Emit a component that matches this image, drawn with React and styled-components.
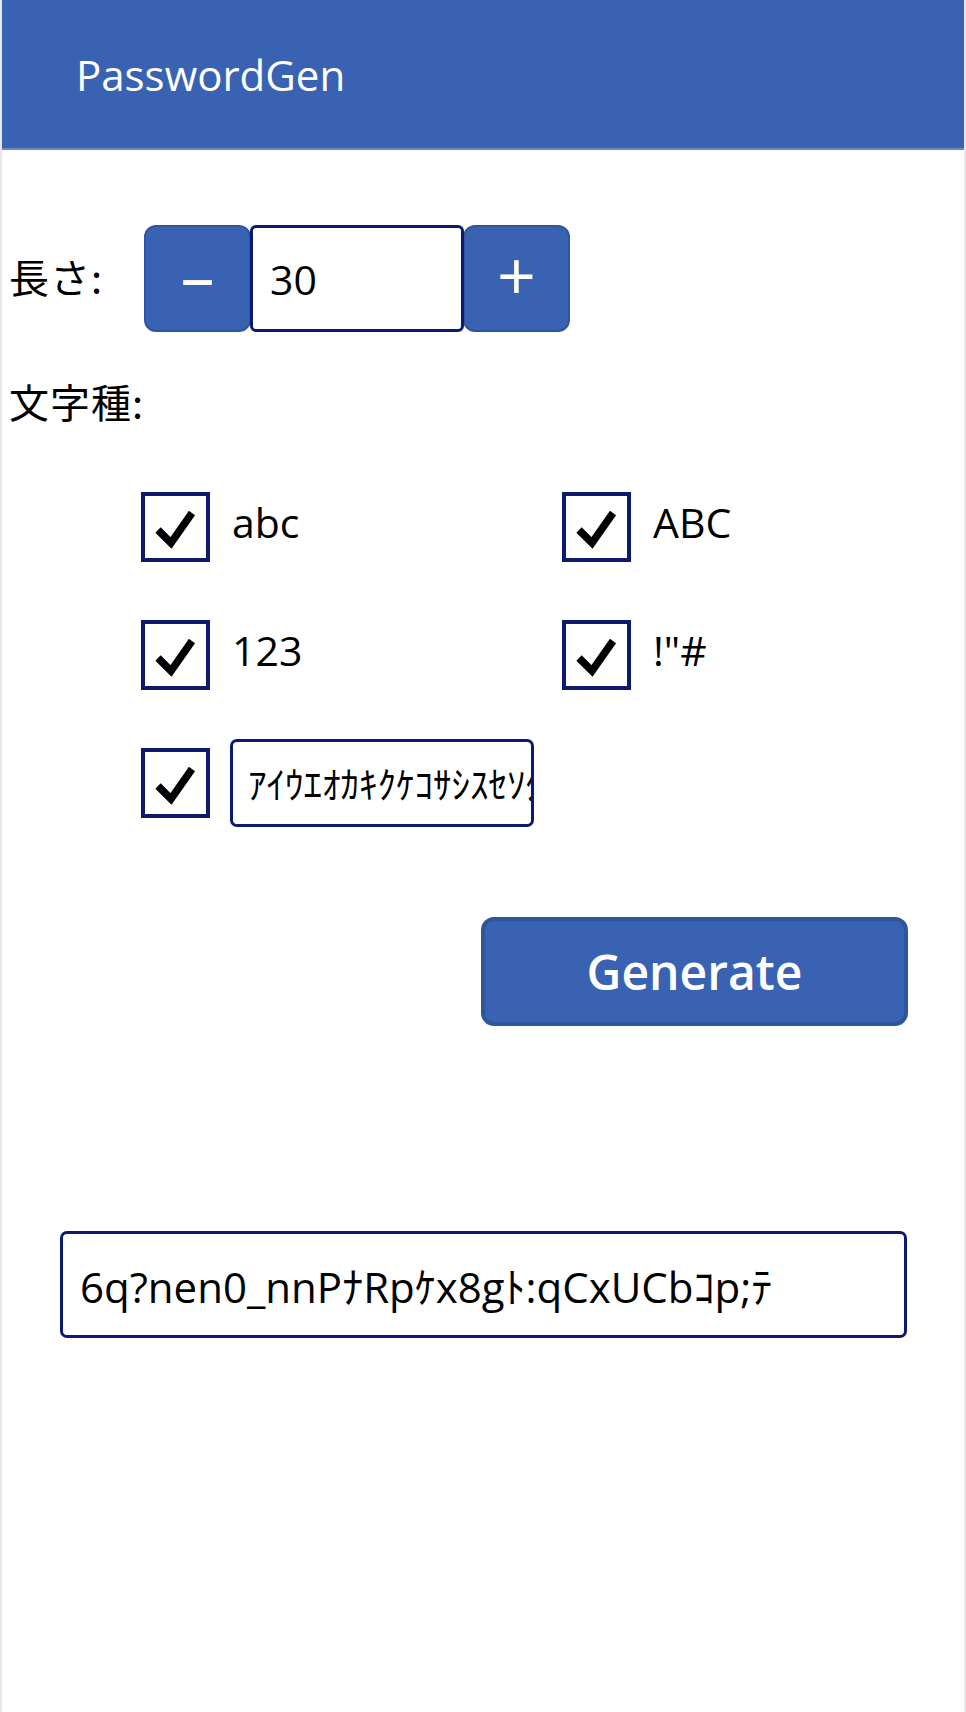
import React, { useState } from "react";
import styled, { createGlobalStyle } from "styled-components";

const GlobalStyle = createGlobalStyle`
  html, body {
    margin: 0;
    padding: 0;
    background: #ffffff;
  }
  body {
    font-family: "Open Sans", "Noto Sans CJK JP", sans-serif;
    color: #000;
  }
`;

const BLUE = "#3962b3";
const BLUE_EDGE = "#2f559f";
const NAVY = "#0b1a6e";

const Screen = styled.div`
  width: 966px;
  min-height: 1712px;
  box-sizing: border-box;
  border-left: 2px solid #e8e8e8;
  border-right: 2px solid #e8e8e8;
  display: flex;
  flex-direction: column;
`;

const Header = styled.header`
  height: 150px;
  box-sizing: border-box;
  background: ${BLUE};
  border-bottom: 2px solid #6d88c6;
  display: flex;
  align-items: center;
  padding: 0 0 0 74px;
  color: #fff;
  font-size: 42px;
  font-weight: 400;
`;

const Body = styled.main`
  display: flex;
  flex-direction: column;
  padding: 0 0 0 7px;
`;

const LengthRow = styled.div`
  margin-top: 75px;
  display: flex;
  align-items: center;
`;

const Label = styled.span`
  font-family: "Noto Sans CJK JP", "Open Sans", sans-serif;
  font-size: 40px;
  line-height: 50px;
  letter-spacing: 1px;
  width: 136px;
  padding-bottom: 6px;
  flex: none;
`;

const Stepper = styled.div`
  display: flex;
  height: 107px;
`;

const StepButton = styled.button`
  width: 107px;
  height: 107px;
  margin: 0 -1px;
  background: ${BLUE};
  border: 2px solid ${BLUE_EDGE};
  border-radius: 12px;
  color: #fff;
  font-family: "Open Sans", sans-serif;
  font-size: 68px;
  font-weight: 500;
  line-height: 1;
  padding: 0 0 8px;
  cursor: pointer;
`;

const NumberBox = styled.input`
  width: 214px;
  height: 107px;
  box-sizing: border-box;
  border: 3px solid ${NAVY};
  border-radius: 6px;
  padding: 0 0 0 17px;
  font-family: "Open Sans", sans-serif;
  font-size: 41px;
  color: #000;
  outline: none;
  position: relative;
  z-index: 1;
`;

const SectionLabel = styled(Label)`
  margin-top: 44px;
`;

const OptionGrid = styled.div`
  margin: 60px 0 0 132px;
  display: grid;
  grid-template-columns: 421px 300px;
  row-gap: 58px;
`;

const Option = styled.label`
  display: flex;
  align-items: center;
  height: 70px;
  cursor: pointer;
`;

const Box = styled.span`
  width: 69px;
  height: 70px;
  box-sizing: border-box;
  border: 4px solid ${NAVY};
  display: flex;
  flex: none;
`;

const OptionText = styled.span`
  margin-left: 22px;
  padding-bottom: 10px;
  font-size: 41px;
  font-family: "Open Sans", sans-serif;
`;

const KanaField = styled.input`
  margin-left: 20px;
  width: 304px;
  height: 88px;
  box-sizing: border-box;
  border: 3px solid ${NAVY};
  border-radius: 7px;
  padding: 0 0 0 15px;
  font-family: "Noto Sans CJK JP", sans-serif;
  font-size: 37px;
  color: #000;
  outline: none;
`;

const GenerateRow = styled.div`
  margin-top: 99px;
  display: flex;
  padding-left: 472px;
`;

const GenerateButton = styled.button`
  width: 427px;
  height: 109px;
  background: ${BLUE};
  border: 4px solid ${BLUE_EDGE};
  border-radius: 13px;
  color: #fff;
  font-family: "Open Sans", sans-serif;
  font-size: 48px;
  font-weight: 600;
  padding: 0;
  cursor: pointer;
`;

const Output = styled.input`
  margin: 205px 0 0 51px;
  width: 847px;
  height: 107px;
  box-sizing: border-box;
  border: 3px solid ${NAVY};
  border-radius: 7px;
  padding: 0 0 0 17px;
  font-family: "Open Sans", "Noto Sans CJK JP", sans-serif;
  font-size: 42px;
  color: #000;
  outline: none;
`;

const Check = () => (
  <svg width="61" height="62" viewBox="0 0 61 62">
    <polyline
      points="13,34 26,47 47,17"
      fill="none"
      stroke="#000"
      strokeWidth="7.5"
      strokeLinejoin="miter"
    />
  </svg>
);

const CheckOption = ({ checked, onToggle, children }) => (
  <Option onClick={onToggle}>
    <Box>{checked && <Check />}</Box>
    {children}
  </Option>
);

export default function App() {
  const [len, setLen] = useState(30);
  const [opts, setOpts] = useState({ lower: true, upper: true, num: true, sym: true, kana: true });
  const [kana, setKana] = useState("ｱｲｳｴｵｶｷｸｹｺｻｼｽｾｿﾀﾁﾂﾃﾄﾅﾆﾇﾈﾉ");
  const [pw] = useState("6q?nen0_nnPﾅRpｹx8gﾄ:qCxUCbｺp;ﾃ");
  const toggle = (k) => () => setOpts({ ...opts, [k]: !opts[k] });

  return (
    <>
      <GlobalStyle />
      <Screen>
        <Header>PasswordGen</Header>
        <Body>
          <LengthRow>
            <Label>長さ:</Label>
            <Stepper>
              <StepButton onClick={() => setLen(Math.max(1, len - 1))}>–</StepButton>
              <NumberBox value={len} onChange={(e) => setLen(e.target.value)} />
              <StepButton onClick={() => setLen(Number(len) + 1)}>+</StepButton>
            </Stepper>
          </LengthRow>
          <SectionLabel>文字種:</SectionLabel>
          <OptionGrid>
            <CheckOption checked={opts.lower} onToggle={toggle("lower")}>
              <OptionText>abc</OptionText>
            </CheckOption>
            <CheckOption checked={opts.upper} onToggle={toggle("upper")}>
              <OptionText>ABC</OptionText>
            </CheckOption>
            <CheckOption checked={opts.num} onToggle={toggle("num")}>
              <OptionText>123</OptionText>
            </CheckOption>
            <CheckOption checked={opts.sym} onToggle={toggle("sym")}>
              <OptionText>!"#</OptionText>
            </CheckOption>
            <CheckOption checked={opts.kana} onToggle={toggle("kana")}>
              <KanaField value={kana} onChange={(e) => setKana(e.target.value)} />
            </CheckOption>
          </OptionGrid>
          <GenerateRow>
            <GenerateButton>Generate</GenerateButton>
          </GenerateRow>
          <Output readOnly value={pw} />
        </Body>
      </Screen>
    </>
  );
}
